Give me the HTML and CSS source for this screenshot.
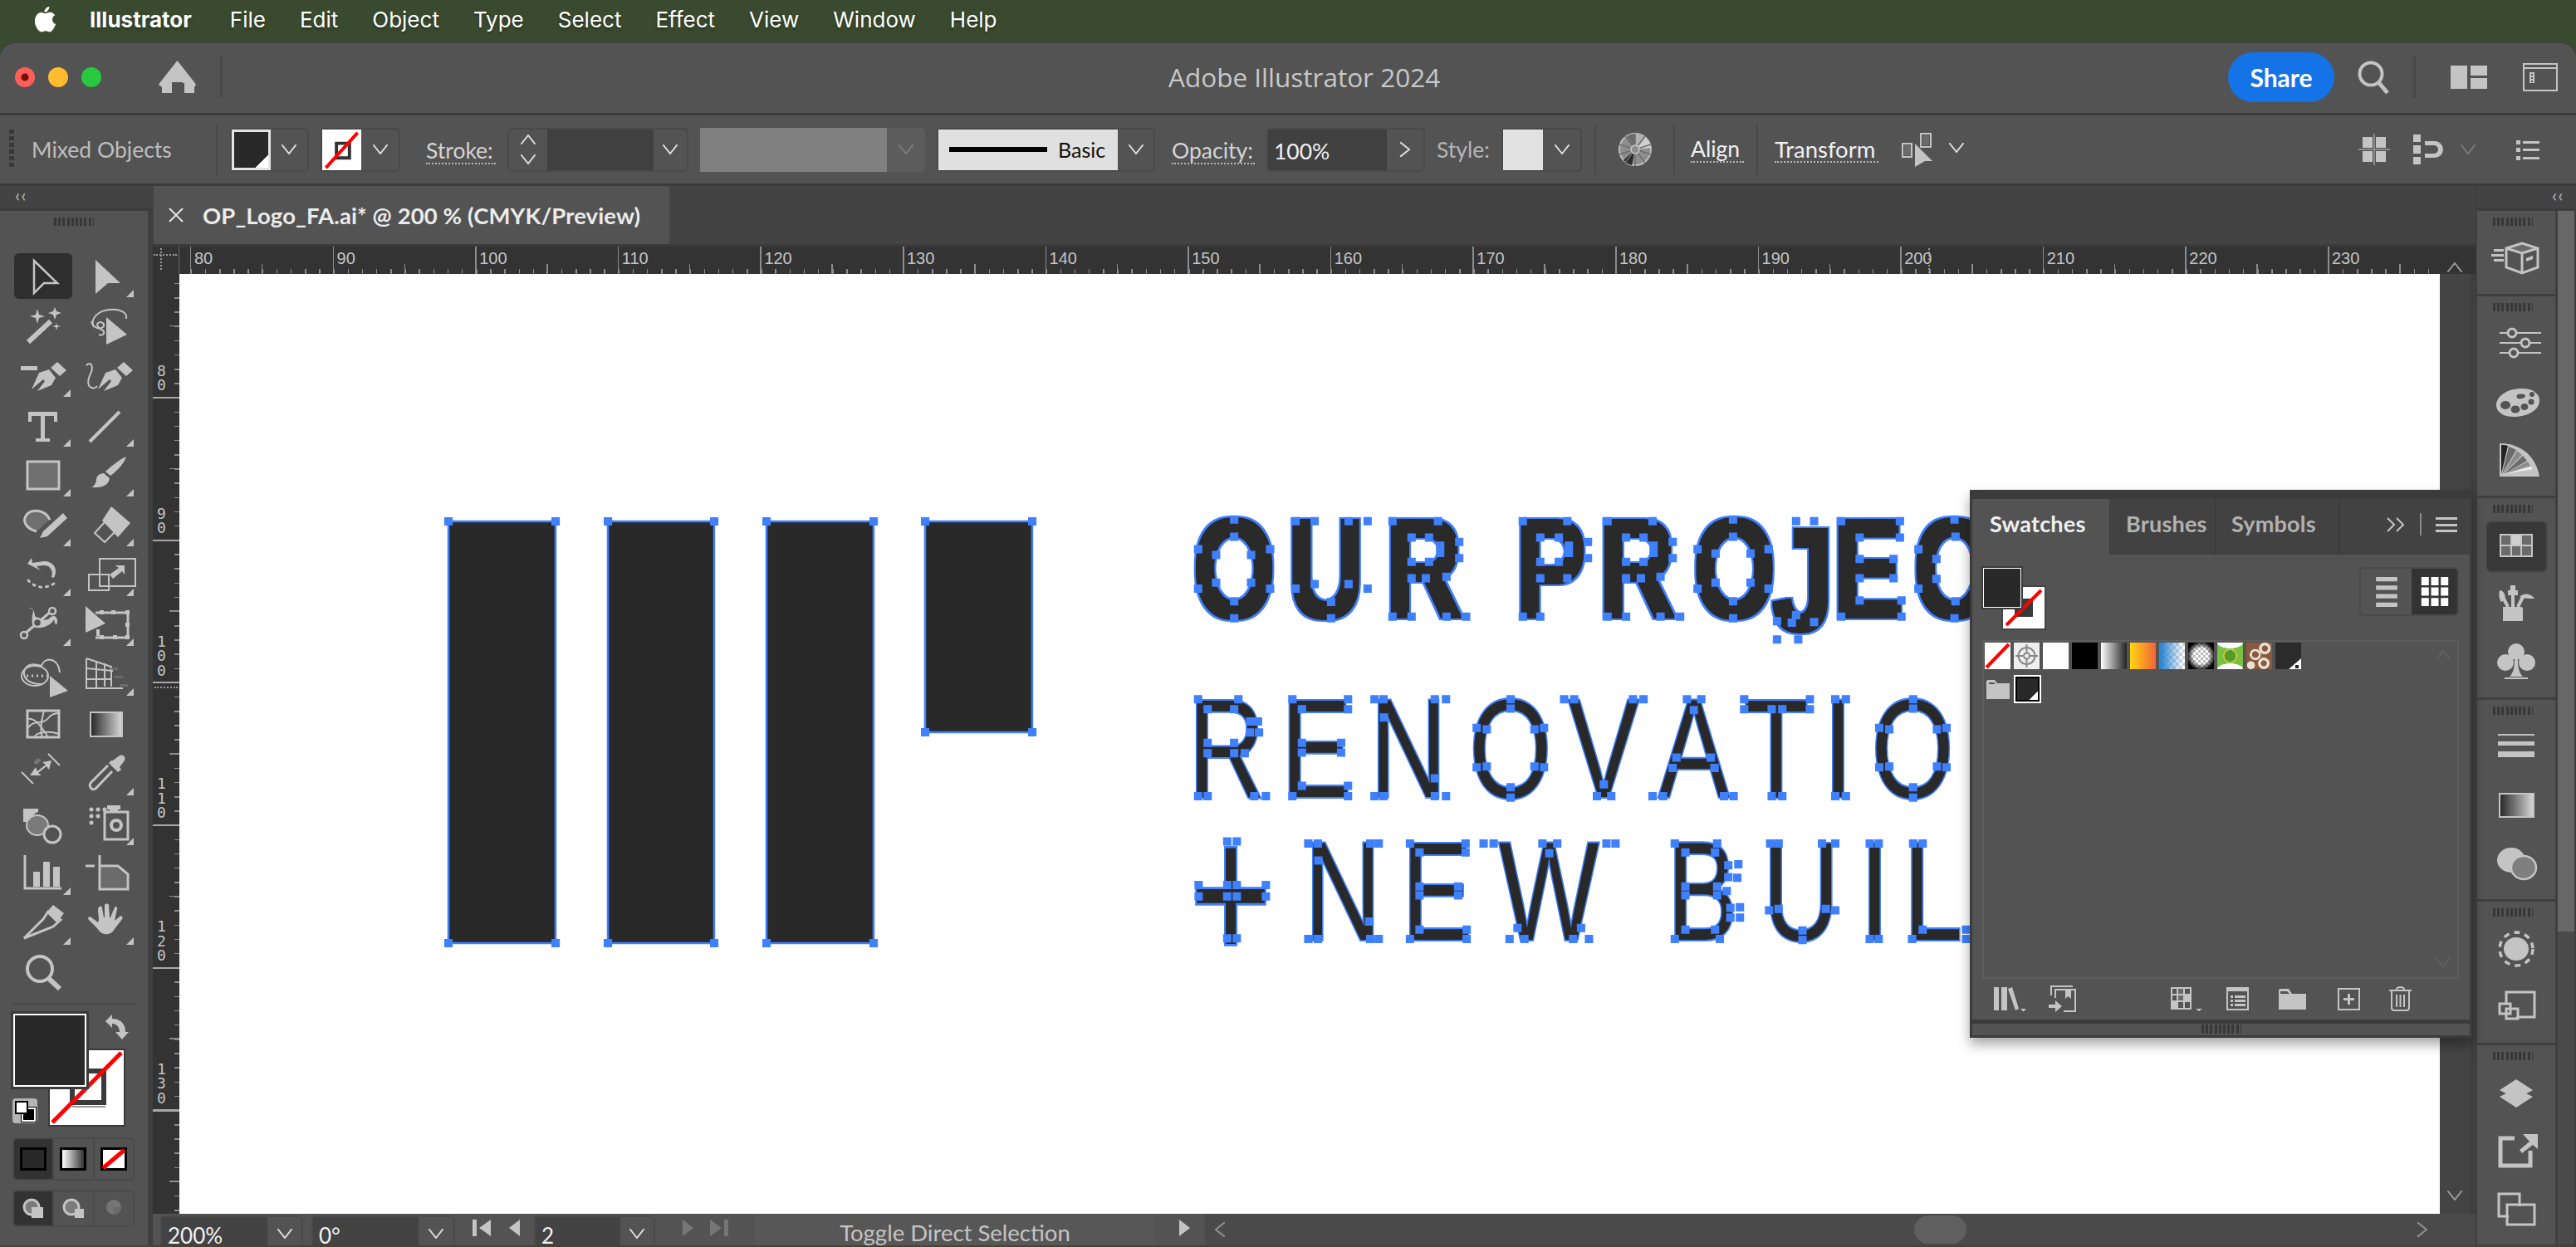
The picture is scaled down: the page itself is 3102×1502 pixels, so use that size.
FILE: index.html
```html
<!DOCTYPE html>
<html lang="en">
<head>
    <meta charset="UTF-8">
    <title>Adobe Illustrator 2024</title>
    <link rel="stylesheet" href="styles.css">
</head>
<body>
<svg class="defs">
    <symbol id="chev" viewBox="0 0 18 12"><path d="M1 1l8 10 8-10"/></symbol>
    <filter id="heavy" x="-5%" y="-10%" width="110%" height="120%">
        <feMorphology in="SourceAlpha" operator="dilate" radius="5.500 3.500" result="outer"/>
        <feFlood flood-color="#3f80ff"/>
        <feComposite in2="outer" operator="in" result="edge"/>
        <feMorphology in="SourceAlpha" operator="dilate" radius="3 1.800" result="inner"/>
        <feFlood flood-color="#292929"/>
        <feComposite in2="inner" operator="in" result="body"/>
        <feMerge><feMergeNode in="edge"/><feMergeNode in="body"/></feMerge>
    </filter>
</svg>

<div class="menubar">
    <svg class="apple" viewBox="0 0 26 32"><path d="M18 0c.3 3-2.600 7-6 7-.4-3 2.600-6.600 6-7zM13 8.500c2 0 3.500-1.500 6-1.500 2.500 0 4.700 1.300 6 3.500-4.800 2.800-4 9.400 1 11.300-1.500 4.200-4.400 9.700-7.300 9.700-2 0-3-1.300-5.200-1.300s-3.300 1.300-5.200 1.300C4.500 31 0 24 0 18 0 11.500 4 7.200 8 7.200c2 0 3.500 1.300 5 1.300z"/></svg>
    <b>Illustrator</b>
    <span>File</span><span>Edit</span><span>Object</span><span>Type</span><span>Select</span><span>Effect</span><span>View</span><span>Window</span><span>Help</span>
</div>

<div class="window">
    <div class="titlebar">
        <div class="title-left">
            <i class="light red"></i><i class="light yellow"></i><i class="light green"></i>
            <svg class="home" viewBox="0 0 45 39"><path d="M22.500 0L43 26l2 3-2 3v7H31V27H22V39H4V32L0 29l2-3z"/><path class="bgcut" d="M16 26h13v13H16z"/></svg>
            <i class="vsep"></i>
        </div>
        <div class="app-title">Adobe Illustrator 2024</div>
        <div class="title-right">
            <div class="share">Share</div>
            <svg class="search" viewBox="0 0 40 40"><circle class="l3" cx="16" cy="16" r="13.500"/><path class="l4" d="M26 27l10 12"/></svg>
            <i class="vsep"></i>
            <svg class="layout1" viewBox="0 0 44 28"><path class="f" d="M0 0h20v28H0zM24 0h20v12H24zM24 15h20v13H24z"/></svg>
            <svg class="layout2" viewBox="0 0 42 34"><path class="l" d="M1 1h40v32H1zM1 6h40"/><path class="f" d="M8 11h6v13H8z"/><path class="d" d="M10 13h2v2h-2zM10 17h2v2h-2zM10 21h2v2h-2z"/></svg>
        </div>
    </div>

    <div class="controlbar">
        <i class="cgrip"></i>
        <span class="mixed">Mixed Objects</span>
        <i class="csep"></i>
        <div class="dd dd-fill">
            <i class="mini-fill"></i>
            <span class="dd-arrow"><svg class="chev"><use href="#chev"/></svg></span>
        </div>
        <div class="dd dd-stroke">
            <i class="mini-stroke"><svg viewBox="0 0 47 50"><path class="sbox" d="M17 17h16v18H17z"/><path class="sred" d="M4 47L43 4"/></svg></i>
            <span class="dd-arrow"><svg class="chev"><use href="#chev"/></svg></span>
        </div>
        <span class="lnk lb-stroke">Stroke:</span>
        <div class="dd spinner">
            <span class="spin"><svg class="chev up"><use href="#chev"/></svg><svg class="chev"><use href="#chev"/></svg></span>
            <i class="input"></i>
            <span class="dd-arrow"><svg class="chev"><use href="#chev"/></svg></span>
        </div>
        <div class="grey-box"></div>
        <span class="dd-arrow dim"><svg class="chev"><use href="#chev"/></svg></span>
        <div class="dd dd-line">
            <div class="line-pre"><i class="line-bar"></i><span>Basic</span></div>
            <span class="dd-arrow"><svg class="chev"><use href="#chev"/></svg></span>
        </div>
        <span class="lnk lb-opacity">Opacity:</span>
        <div class="dd dd-op">
            <span class="input op-val">100%</span>
            <span class="dd-arrow"><svg class="chev side" viewBox="0 0 12 18"><path d="M1 1l10 8-10 8"/></svg></span>
        </div>
        <span class="lb-style">Style:</span>
        <div class="dd dd-style">
            <i class="style-sw"></i>
            <span class="dd-arrow"><svg class="chev"><use href="#chev"/></svg></span>
        </div>
        <i class="csep s1"></i>
        <svg class="wheel" viewBox="0 0 40 40"><circle class="wheel-c" cx="20" cy="20" r="19"/><path class="g" d="M20 20L10 4a19 19 0 0 1 10-3z"/><path class="lg" d="M20 20V1a19 19 0 0 1 12 5z"/><path class="lg2" d="M20 20L32 6a19 19 0 0 1 7 12z"/><path class="dk" d="M20 20L6 33a19 19 0 0 0 10 6z"/><path class="spk" d="M20 1v39M1 14l38 12M1 26l38-12M8 4l24 32M32 4L8 36"/><circle class="hub" cx="20" cy="20" r="5"/></svg>
        <i class="csep s2"></i>
        <span class="lnk bright lb-align">Align</span>
        <i class="csep s3"></i>
        <span class="lnk bright lb-trans">Transform</span>
        <svg class="tr-ic" viewBox="0 0 40 42"><path class="l" d="M1 14h11v16H1zM23 2h12v16H23z"/><path class="g" d="M3 16h8v12H3zM25 4h8v12H25z"/><path class="f" d="M16 14l21 21-9 0-12 7z"/></svg>
        <svg class="chev tr-chev"><use href="#chev"/></svg>
        <div class="ctrl-right">
            <svg class="rc1" viewBox="0 0 38 38"><path class="f" d="M5 4h12v13H5zM21 4h12v13H21zM5 21h12v13H5zM21 21h12v13H21z"/><path class="lt" d="M0 19h38M19 0v38"/></svg>
            <svg class="rc2" viewBox="0 0 37 36"><path class="f" d="M0 0h9v9H0zM0 13h9v10H0zM0 27h9v9H0zM14 8h12a10 10 0 0 1 0 20H14v-5h11a5 5 0 0 0 0-10H14z"/></svg>
            <svg class="chev dimchev"><use href="#chev"/></svg>
            <svg class="rc3" viewBox="0 0 28 28"><path class="f" d="M0 3h5v5H0zM0 12h5v5H0zM0 22h5v5H0zM8 4h20v3H8zM8 13h20v3H8zM8 23h20v3H8z"/></svg>
        </div>
    </div>

    <div class="workspace">
        <div class="dock-left">
            <div class="strip"><span class="collapse">&lsaquo;&lsaquo;</span></div>
            <div class="tool-panel">
                <i class="grip"></i>
                <div class="tools">
                    <div class="t on"><svg viewBox="0 0 44 44"><path class="lp" d="M11 4l28 27H23L11 43z"/></svg></div>
                    <div class="t more"><svg viewBox="0 0 44 44"><path class="f" d="M9 3l30 28-15 0L9 44z"/></svg></div>

                    <div class="t"><svg viewBox="0 0 44 44"><path class="l5" d="M4 42l27-25"/><path class="f" d="M15 2l2 7 7 2-7 2-2 7-2-7-7-2 7-2zM36 0l2 5 6 2-6 2-2 6-2-6-6-2 6-2zM38 19l1 3 4 1-4 1-1 4-1-4-4-1 4-1z"/></svg></div>
                    <div class="t"><svg viewBox="0 0 44 44"><path class="l" d="M7 24C2 14 12 4 26 3c12-1 22 3 20 11M4 17c2 8 9 10 14 7 3-3-1-8-6-5-3 3 2 7 6 9 3 3 0 7-5 5"/><path class="f" d="M22 12l25 21-25 12z"/></svg></div>

                    <div class="t more"><svg viewBox="0 0 44 44"><path class="f" d="M-5 11h20v5H-5zM8 39l9-20 12-4 8 10-5 9-17 7 9-12-2-2z"/><path class="f" d="M31 13l8-7 11 10-8 7z"/></svg></div>
                    <div class="t"><svg viewBox="0 0 44 44"><path class="l" d="M-2 10c6-6 8 2 6 8-4 8-6 16 0 19 3 1 6 0 7-2"/><path class="f" d="M12 39l9-20 12-4 8 10-5 9-17 7 9-12-2-2z"/><path class="f" d="M35 13l8-7 11 10-8 7z"/></svg></div>

                    <div class="t more"><svg viewBox="0 0 44 44"><path class="f" d="M4 6h35v12h-4v-7H24v27h6v4H13v-4h6V11H8v7H4z"/></svg></div>
                    <div class="t more"><svg viewBox="0 0 44 44"><path class="l3" d="M2 42L38 6"/></svg></div>

                    <div class="t more"><svg viewBox="0 0 44 44"><path class="gm" d="M3 6h38v33H3z"/></svg></div>
                    <div class="t more"><svg viewBox="0 0 44 44"><path class="f" d="M46 0c-2 8-12 18-19 23l-6-5C30 10 40 2 46 0zM19 20l7 6c-1 8-8 12-22 11 4-2 6-6 6-10 1-5 5-7 9-7z"/></svg></div>

                    <div class="t more"><svg viewBox="0 0 44 44"><path class="gm" d="M14 30C2 27-4 18 2 10 8 3 24 3 30 16"/><path class="f" d="M22 30L46 8l5 6-24 22-9 2z"/></svg></div>
                    <div class="t more"><svg viewBox="0 0 44 44"><path class="f" d="M28 0l23 20-15 17-19-20z"/><path class="l" d="M20 19L8 32l12 11 14-14"/></svg></div>

                    <div class="t more"><svg viewBox="0 0 44 44"><path class="f" d="M3 9l5-7 1 6 14-2c10 0 18 8 12 20l-3-1c3-9-3-15-10-14L14 12l5 5z"/><path class="dots" d="M4 29c8 9 20 11 31 4"/></svg></div>
                    <div class="t more"><svg viewBox="0 0 44 44"><path class="l" d="M14 3h43v33H14zM1 22h24v19H1z"/><path class="f" d="M26 22l11-8-4-3h11v11l-3-4-11 9z"/></svg></div>

                    <div class="t more"><svg viewBox="0 0 44 44"><path class="f" d="M4 2c6-1 8 6 8 10 2 2 14 8 18 2 4-4 9-2 9 4 0 4-2 8-4-2-2 6-16 14-24 8-4-2-2-14-1-18-1-3-3-3-6-4z"/><path class="lm" d="M-1 34L32 6"/><circle class="ringd" cx="-1" cy="35" r="4"/><circle class="ringd" cx="33" cy="6" r="4"/><circle class="ringd" cx="15" cy="20" r="5"/></svg></div>
                    <div class="t more"><svg viewBox="0 0 44 44"><path class="f" d="M-3 0l24 21-24 11z"/><path class="lm" d="M9 8h39v30H9"/><path class="f" d="M14 5h5v5h-5zM28 5h5v5h-5zM45 5h5v5h-5zM45 20h5v5h-5zM45 35h5v5h-5zM30 35h5v5h-5zM14 35h5v5h-5zM14 28h-4v8h4z"/></svg></div>

                    <div class="t"><svg viewBox="0 0 44 44"><path class="l" d="M20 34C4 34-4 26 0 16c4-8 14-6 20-4C22 2 40 0 42 20"/><ellipse class="l" cx="12" cy="24" rx="16" ry="12"/><path class="dots2" d="M2 24h26"/><path class="f" d="M30 24l22 18-22 8z"/></svg></div>
                    <div class="t more"><svg viewBox="0 0 44 44"><path class="l" d="M-2 3v36h44M-2 3l30 10v24M-2 15l32 3M-2 28h30M10 6v32M20 9v28"/><path class="g" d="M28 14h8v3h-8zM32 24h10v3H32zM38 34h10v3H38z"/></svg></div>

                    <div class="t"><svg viewBox="0 0 44 44"><path class="lm" d="M3 6h38v32H3z"/><path class="l" d="M3 27c10-12 18-2 27-14 4-4 8-4 11-4M21 38c-4-10 0-24 2-32M3 16c8-2 15 6 25 22M12 38c0-6 16-8 29-4"/></svg></div>
                    <div class="t"><div class="ic-grad"></div></div>

                    <div class="t"><svg viewBox="0 0 44 44"><path class="l" d="M-4 20l14 14M28-2l14 14"/><path class="f" d="M6 24L13 14l2 5 10-8-4-3 11-2-3 11-3-4-10 8 4 3z"/><path class="g2" d="M10 8l6-5 4 3-6 5z"/></svg></div>
                    <div class="t more"><svg viewBox="0 0 44 44"><path class="f" d="M30 6l8-6c4-2 8 2 6 6l-6 8 2 3-4 3-11-11 3-3z"/><path class="lm" d="M24 12L4 32c-4 4 0 11 5 8l20-21"/></svg></div>

                    <div class="t"><svg viewBox="0 0 44 44"><path class="f" d="M-2 4h18v4c-6 2-8 6-7 12H-2z"/><ellipse class="gl" cx="15" cy="24" rx="13" ry="12"/><circle class="ringb" cx="33" cy="35" r="10"/></svg></div>
                    <div class="t more"><svg viewBox="0 0 44 44"><path class="f" d="M23 0h16v5h-3v3H26V5h-3z"/><path class="lm" d="M20 8h28v33H20z"/><circle class="ringt" cx="34" cy="24" r="6"/><circle class="f" cx="4" cy="5" r="2.500"/><circle class="f" cx="12" cy="5" r="2.500"/><circle class="f" cx="20" cy="5" r="2.500"/><circle class="f" cx="4" cy="13" r="2.500"/><circle class="f" cx="12" cy="13" r="2.500"/><circle class="f" cx="4" cy="21" r="2.500"/></svg></div>

                    <div class="t more"><svg viewBox="0 0 44 44"><path class="lm" d="M0 0v40h44"/><path class="f" d="M10 20h8v18h-8zM22 8h8v30h-8zM34 14h8v24h-8z"/></svg></div>
                    <div class="t"><svg viewBox="0 0 44 44"><path class="lm" d="M-3 13h11M14 0v13M14 13h22l12 10v18H14z"/><path class="g" d="M16 15h19l11 9v15H16z"/></svg></div>

                    <div class="t more"><svg viewBox="0 0 44 44"><path class="lm" d="M-1 40L22 17l6-9 15 10-9 8-2 1z"/><path class="f" d="M26 9l8-9 13 10-6 8-3 3z"/></svg></div>
                    <div class="t more"><svg viewBox="0 0 44 44"><path class="f" d="M14 2c2-1 3 0 3 2l2 11h1V0c1-2 4-2 5 0l1 15h1l5-12c1-2 4-1 3 2l-3 14 6-5c2-2 5 1 3 3l-9 12c-3 5-7 7-12 6-6-1-7-5-10-8L1 18c-2-2 0-5 3-3l8 6 1-3-1-13c0-1 1-3 2-3z"/></svg></div>

                    <div class="t"><svg viewBox="0 0 44 44"><circle class="l3" cx="18" cy="17" r="15"/><path class="l5" d="M28 28l14 13"/></svg></div>
                </div>

                <i class="tool-sep"></i>

                <div class="color-block">
                    <div class="big-stroke"><svg viewBox="0 0 89 90"><path class="sbox2" d="M27 25h38v38H27z"/><path class="sline" d="M27 68h40"/><path class="sred2" d="M3 87L86 3"/></svg></div>
                    <div class="big-fill"></div>
                    <svg class="swap" viewBox="0 0 28 30"><path class="f" d="M0 8l8-8v5c8 0 16 4 16 16h4l-8 9-8-9h5c0-6-4-10-9-10v5z"/></svg>
                    <div class="defaults"><i class="def-b"></i><i class="def-w"></i></div>
                </div>

                <div class="mode-row">
                    <div class="mode on"><i class="m-fill"></i></div>
                    <div class="mode"><i class="m-grad"></i></div>
                    <div class="mode"><i class="m-none"><svg viewBox="0 0 26 22"><path class="sred" d="M0 22L26 0"/></svg></i></div>
                </div>
                <div class="mode-row small">
                    <div class="mode on"><svg viewBox="0 0 26 24"><circle class="ringo" cx="11" cy="10" r="9"/><path class="f" d="M11 10h14v13H11z"/></svg></div>
                    <div class="mode"><svg viewBox="0 0 26 24"><circle class="ringo" cx="11" cy="10" r="9"/><path class="f" d="M15 12h11v11H15z"/></svg></div>
                    <div class="mode faded"><svg viewBox="0 0 26 24"><circle class="g3" cx="13" cy="10" r="9"/><path class="f2" d="M13 10h9a9 9 0 0 1-9 9z"/></svg></div>
                </div>
            </div>
        </div>

        <div class="doc">
            <div class="tabbar">
                <div class="doc-tab">
                    <svg class="tab-x" viewBox="0 0 18 18"><path d="M1 1l16 16M17 1L1 17"/></svg>
                    <span>OP_Logo_FA.ai* @ 200 % (CMYK/Preview)</span>
                </div>
            </div>
            <div class="hruler">
                <i class="corner"></i>
                <span>80</span><span>90</span><span>100</span><span>110</span><span>120</span><span>130</span><span>140</span><span>150</span><span>160</span><span>170</span><span>180</span><span>190</span><span>200</span><span>210</span><span>220</span><span>230</span>
                <i class="cursor-x"></i>
            </div>
            <div class="doc-mid">
                <div class="vruler">
                    <span>80</span><span>90</span><span>100</span><span>110</span><span>120</span><span>130</span>
                    <i class="cursor-y"></i>
                </div>
                <div class="canvas">
                    <svg class="artwork" viewBox="0 0 3102 1502">
                        <rect class="bar" x="540" y="628" width="129" height="508"/>
                        <rect class="bar" x="732" y="628" width="128" height="508"/>
                        <rect class="bar" x="923" y="628" width="129" height="508"/>
                        <rect class="bar" x="1114" y="628" width="129" height="254"/>
                        <path class="anchor" d="M540 628h.1M669 628h.1M540 1136h.1M669 1136h.1M732 628h.1M860 628h.1M732 1136h.1M860 1136h.1M923 628h.1M1052 628h.1M923 1136h.1M1052 1136h.1M1114 628h.1M1243 628h.1M1114 882h.1M1243 882h.1"/>

                        <text class="art bold" transform="translate(0 743) scale(.76 1)" x="1890 2040 2195 2300 2401 2533 2683 2808 2904 3032">OUR PRO<tspan class="tall-j" dy="16">J</tspan><tspan dy="-16">EC</tspan></text>
                        <text class="art" transform="translate(0 960) scale(.76 1)" x="1883 2030 2171 2328 2485 2628 2763 2889 2965">RENOVATIO</text>
                        <text class="art" transform="translate(1433 1158) scale(1 1.4)">+</text>
                        <text class="art" transform="translate(0 1132) scale(.76 1)" x="2067 2221 2375 2500 2641 2793 2947 3016">NEW BUIL</text>

                        <g transform="translate(1400 600) scale(.6378 .35714)">
                            <path class="anchor" d="M135 72h.1M67 172h.1M203 172h.1M101 192h.1M167 192h.1M135 130h.1M67 305h.1M203 305h.1M101 285h.1M167 285h.1M135 348h.1M135 405h.1M251 78h.1M287 78h.1M351 78h.1M387 78h.1M251 305h.1M287 290h.1M351 290h.1M387 305h.1M318 350h.1M318 405h.1M434 78h.1M520 78h.1M470 133h.1M503 133h.1M560 148h.1M560 202h.1M524 160h.1M524 185h.1M470 215h.1M503 215h.1M470 270h.1M497 270h.1M536 265h.1M434 400h.1M470 400h.1M536 400h.1M573 400h.1M680 78h.1M764 78h.1M713 133h.1M748 133h.1M803 148h.1M803 202h.1M767 160h.1M767 185h.1M713 215h.1M748 215h.1M713 270h.1M764 270h.1M680 400h.1M713 400h.1M840 78h.1M925 78h.1M875 133h.1M908 133h.1M963 148h.1M963 202h.1M927 160h.1M927 185h.1M875 215h.1M908 215h.1M875 270h.1M903 270h.1M940 265h.1M840 400h.1M875 400h.1M940 400h.1M977 400h.1M1077 72h.1M1010 172h.1M1144 172h.1M1044 187h.1M1110 187h.1M1077 130h.1M1010 305h.1M1144 305h.1M1044 285h.1M1110 285h.1M1077 348h.1M1077 405h.1M1196 78h.1M1230 78h.1M1196 395h.1M1230 418h.1M1160 415h.1M1188 420h.1M1160 477h.1M1200 477h.1M1281 78h.1M1392 78h.1M1316 133h.1M1392 133h.1M1316 205h.1M1380 205h.1M1316 270h.1M1380 270h.1M1316 345h.1M1395 345h.1M1281 400h.1M1395 400h.1M1495 72h.1M1427 172h.1M1461 205h.1M1497 130h.1M1427 305h.1M1461 272h.1M1497 348h.1M1495 405h.1"/>
                            <path class="anchor" d="M67 678h.1M143 678h.1M85 712h.1M135 712h.1M165 753h.1M180 753h.1M165 790h.1M182 790h.1M85 825h.1M135 825h.1M85 860h.1M135 860h.1M155 860h.1M67 1005h.1M85 1005h.1M173 1005h.1M195 1005h.1M245 678h.1M350 678h.1M263 712h.1M350 712h.1M263 825h.1M337 825h.1M263 858h.1M337 858h.1M263 970h.1M350 970h.1M245 1005h.1M350 1005h.1M400 678h.1M417 678h.1M514 678h.1M535 678h.1M418 740h.1M514 945h.1M400 1005h.1M417 1005h.1M514 1005h.1M535 1005h.1M657 678h.1M593 775h.1M612 780h.1M702 780h.1M720 775h.1M657 710h.1M593 908h.1M612 905h.1M702 905h.1M720 908h.1M657 975h.1M657 1010h.1M758 678h.1M777 678h.1M888 678h.1M908 678h.1M833 965h.1M820 1005h.1M847 1005h.1M990 678h.1M1017 678h.1M1003 715h.1M970 875h.1M1035 875h.1M963 910h.1M1042 910h.1M925 1005h.1M945 1005h.1M1060 1005h.1M1078 1005h.1M1098 678h.1M1222 678h.1M1098 712h.1M1222 712h.1M1150 712h.1M1170 712h.1M1150 1005h.1M1170 1005h.1M1270 678h.1M1290 678h.1M1270 1005h.1M1290 1005h.1M1417 678h.1M1353 775h.1M1372 780h.1M1462 780h.1M1480 775h.1M1417 710h.1M1353 908h.1M1372 905h.1M1462 905h.1M1480 908h.1M1417 975h.1M1417 1010h.1"/>
                            <path class="anchor" d="M122 1158h.1M140 1158h.1M68 1305h.1M195 1305h.1M68 1343h.1M195 1343h.1M122 1305h.1M140 1305h.1M122 1343h.1M140 1343h.1M122 1485h.1M140 1485h.1M275 1165h.1M293 1165h.1M392 1165h.1M408 1165h.1M294 1222h.1M390 1428h.1M275 1487h.1M293 1487h.1M392 1487h.1M408 1487h.1M467 1165h.1M572 1165h.1M485 1195h.1M572 1195h.1M485 1310h.1M558 1310h.1M485 1340h.1M558 1340h.1M485 1455h.1M574 1455h.1M467 1487h.1M574 1487h.1M606 1165h.1M625 1165h.1M717 1165h.1M745 1165h.1M838 1165h.1M855 1165h.1M730 1198h.1M670 1450h.1M790 1450h.1M655 1487h.1M683 1487h.1M775 1487h.1M805 1487h.1M967 1165h.1M1047 1165h.1M987 1195h.1M1043 1195h.1M1068 1238h.1M1087 1235h.1M1068 1278h.1M1085 1280h.1M987 1310h.1M1047 1310h.1M987 1340h.1M1047 1340h.1M1065 1325h.1M1072 1382h.1M1090 1380h.1M1072 1415h.1M1090 1415h.1M987 1455h.1M1043 1455h.1M967 1487h.1M1052 1487h.1M1147 1165h.1M1163 1165h.1M1245 1165h.1M1270 1165h.1M1145 1390h.1M1163 1385h.1M1252 1385h.1M1270 1390h.1M1208 1458h.1M1208 1490h.1M1335 1165h.1M1352 1165h.1M1335 1487h.1M1352 1487h.1M1417 1165h.1M1435 1165h.1M1435 1455h.1M1517 1455h.1M1415 1487h.1M1517 1487h.1"/>
                        </g>
                    </svg>
                </div>
                <div class="vscroll">
                    <svg class="chev up"><use href="#chev"/></svg>
                    <svg class="chev"><use href="#chev"/></svg>
                </div>
            </div>
            <div class="status">
                <div class="field f200"><span>200%</span><em><svg class="chev"><use href="#chev"/></svg></em></div>
                <div class="field f0"><span>0°</span><em><svg class="chev"><use href="#chev"/></svg></em></div>
                <svg class="nav n-first" viewBox="0 0 24 24"><path class="f" d="M0 2h5v20H0zM22 2v20L8 12z"/></svg>
                <svg class="nav n-prev" viewBox="0 0 16 24"><path class="f" d="M14 2v20L1 12z"/></svg>
                <div class="field fpage"><span>2</span><em><svg class="chev"><use href="#chev"/></svg></em></div>
                <svg class="nav n-next" viewBox="0 0 16 24"><path class="g2" d="M2 2v20l13-10z"/></svg>
                <svg class="nav n-last" viewBox="0 0 24 24"><path class="g2" d="M2 2v20l14-10zM19 2h5v20h-5z"/></svg>
                <div class="status-text">Toggle Direct Selection</div>
                <svg class="nav n-more" viewBox="0 0 16 24"><path class="f" d="M2 2v20l13-10z"/></svg>
                <div class="hscroll">
                    <svg class="chev side left" viewBox="0 0 12 18"><path d="M11 1L1 9l10 8"/></svg>
                    <i class="hthumb"></i>
                    <svg class="chev side" viewBox="0 0 12 18"><path d="M1 1l10 8-10 8"/></svg>
                </div>
            </div>
        </div>

        <div class="dock-right">
            <div class="strip right"><span class="collapse">&lsaquo;&lsaquo;</span></div>
            <div class="dock-body">
                <div class="dock-sections">
                    <div class="sec">
                        <i class="grip"></i>
                        <div class="d-ic"><svg viewBox="0 0 60 44"><path class="g" d="M18 10l19-6 19 6-19 6z"/><path class="lm" d="M18 10l19-6 19 6v23l-19 7-19-7zM18 10l19 6 19-6M37 16v24"/><path class="f" d="M0 17h15v3H0zM3 11h12v3H3zM3 23h12v3H3zM42 22l8-3v4l-8 3z"/></svg></div>
                    </div>
                    <div class="sec">
                        <i class="grip"></i>
                        <div class="d-ic"><svg viewBox="0 0 60 44"><path class="l" d="M10 9h10M30 9h30M10 21h26M46 21h14M10 33h12M32 33h28"/><circle class="lm" cx="25" cy="9" r="5"/><circle class="lm" cx="41" cy="21" r="5"/><circle class="lm" cx="27" cy="33" r="5"/></svg></div>
                        <div class="d-ic"><svg viewBox="0 0 60 44"><path class="f" d="M6 26C6 14 22 5 38 6c10 0 14 3 19 9 3 8-1 16-9 20-10 6-26 6-33 3C9 35 6 31 6 26z"/><path class="d" d="M32 13c6-1 9 0 9 2s-5 4-9 3c-2-1-2-4 0-5z"/><ellipse class="d" cx="17" cy="26" rx="6" ry="5"/><ellipse class="d" cx="29" cy="31" rx="5.500" ry="4.500"/><ellipse class="d" cx="40" cy="28" rx="4.500" ry="4"/><ellipse class="d" cx="48" cy="22" rx="3.500" ry="3.500"/><ellipse class="d" cx="49" cy="13" rx="3" ry="3"/></svg></div>
                        <div class="d-ic"><svg viewBox="0 0 60 44"><path class="f" d="M10 2c26 0 44 16 48 40H10z"/><path class="k" d="M12 4c3 0 6 0 8 1l-8 34z"/><path class="g" d="M21 6c3 1 6 2 9 4L13 39z"/><path class="g3" d="M31 11l6 5-23 23z"/><path class="g" d="M38 17l5 6-28 16z"/><path class="g3" d="M44 24l3 5-32 10z"/><path class="lw" d="M48 30l2 3-35 6z"/></svg></div>
                    </div>
                    <div class="sec">
                        <i class="grip"></i>
                        <div class="d-ic on"><svg viewBox="0 0 60 44"><path class="f" d="M10 8h40v28H10z"/><path class="g" d="M12 10h11v11H12zM37 10h11v11H37zM12 23h11v11H12zM25 23h10v11H25zM37 23h11v11H37z"/><path class="lg2" d="M25 10h10v11H25z"/></svg></div>
                        <div class="d-ic"><svg viewBox="0 0 60 44"><path class="f" d="M14 26h22a2 2 0 0 1 2 2v15H14z"/><path class="l3" d="M26 26V12M20 26L14 14M32 26l6-12"/><path class="f" d="M23 0h6v6h3v6H20V6h3zM10 6c5 0 8 6 6 12l-4 2c-3-4-3-10-2-14zM34 14c6-6 14-4 18 2-6 0-14 0-18-2z"/></svg></div>
                        <div class="d-ic"><svg viewBox="0 0 60 44"><circle class="f" cx="30" cy="10" r="10"/><circle class="f" cx="17" cy="23" r="10"/><circle class="f" cx="43" cy="23" r="10"/><path class="f" d="M28 20h4c0 10 2 16 6 20H22c4-4 6-10 6-20zM16 41h28v2H16z"/></svg></div>
                    </div>
                    <div class="sec">
                        <i class="grip"></i>
                        <div class="d-ic"><svg viewBox="0 0 60 44"><path class="f" d="M8 6h44v2H8zM8 15h44v5H8zM8 27h44v7H8z"/></svg></div>
                        <div class="d-ic"><div class="ic-grad side"></div></div>
                        <div class="d-ic"><svg viewBox="0 0 60 44"><ellipse class="f" cx="24" cy="18" rx="17" ry="15"/><ellipse class="g4" cx="39" cy="27" rx="15" ry="14"/></svg></div>
                    </div>
                    <div class="sec">
                        <i class="grip"></i>
                        <div class="d-ic"><svg viewBox="0 0 60 44"><ellipse class="f" cx="30" cy="22" rx="15" ry="14"/><ellipse class="dash" cx="30" cy="22" rx="20" ry="20"/></svg></div>
                        <div class="d-ic"><svg viewBox="0 0 60 44"><path class="lm" d="M18 18V4h34v30H30"/><path class="lm" d="M10 18h13v12H10zM18 24h14v12H18z"/></svg></div>
                    </div>
                    <div class="sec">
                        <i class="grip"></i>
                        <div class="d-ic"><svg viewBox="0 0 60 44"><path class="f" d="M30 6l20 13-20 11-20-11zM10 27l8-4 12 7 12-7 8 4-20 13z"/></svg></div>
                        <div class="d-ic"><svg viewBox="0 0 60 44"><path class="l4" d="M28 7H11v33h36V22"/><path class="f" d="M38 2h18v18l-6-5-13 10-3-4 12-10z"/></svg></div>
                        <div class="d-ic"><svg viewBox="0 0 60 44"><path class="lm" d="M9 4h25v27H9zM19 17h33v24H19z"/><path class="d" d="M21 19h29v20H21z"/></svg></div>
                    </div>
                </div>
                <div class="dock-scroll"><i></i></div>
            </div>
        </div>

        <div class="swatch-panel">
            <div class="sw-tabs">
                <span class="sw-tab on">Swatches</span>
                <span class="sw-tab brushes">Brushes</span>
                <span class="sw-tab symbols">Symbols</span>
                <div class="sw-menu">
                    <svg class="sw-dbl" viewBox="0 0 22 18"><path d="M1 1l8 8-8 8M12 1l8 8-8 8"/></svg>
                    <i class="sw-bar"></i>
                    <svg class="sw-ham" viewBox="0 0 26 18"><path class="f" d="M0 0h26v3H0zM0 8h26v3H0zM0 15h26v3H0z"/></svg>
                </div>
            </div>
            <div class="sw-body">
                <div class="sw-top">
                    <div class="fs-mini">
                        <div class="fs-stroke"><svg viewBox="0 0 46 46"><path class="sbox3" d="M13 13h20v20H13z"/><path class="sred" d="M2 44L44 2"/></svg></div>
                        <div class="fs-fill"></div>
                    </div>
                    <div class="view-toggle">
                        <div class="vt"><svg viewBox="0 0 30 42"><path class="f" d="M0 0h30v6H0zM0 12h30v6H0zM0 24h30v6H0zM0 36h30v6H0z"/></svg></div>
                        <div class="vt on"><svg viewBox="0 0 36 40"><path class="w" d="M0 0h10v11H0zM13 0h10v11H13zM26 0h10v11H26zM0 14h10v11H0zM13 14h10v11H13zM26 14h10v11H26zM0 28h10v11H0zM13 28h10v11H13zM26 28h10v11H26z"/></svg></div>
                    </div>
                </div>
                <div class="sw-list">
                    <div class="sw-row">
                        <i class="sw none"><svg viewBox="0 0 31 32"><path class="sred" d="M2 30L29 2"/></svg></i>
                        <i class="sw reg"><svg viewBox="0 0 31 32"><circle class="rg" cx="15.500" cy="16" r="10"/><circle class="rg" cx="15.500" cy="16" r="3.500"/><path class="rg" d="M15.500 2v10M15.500 20v10M2 16h10M19 16h10"/></svg></i>
                        <i class="sw white"></i>
                        <i class="sw black"></i>
                        <i class="sw grad1"></i>
                        <i class="sw grad2"></i>
                        <i class="sw grad3"></i>
                        <i class="sw grad4"></i>
                        <i class="sw pat1"></i>
                        <i class="sw pat2"></i>
                        <i class="sw dark"><svg viewBox="0 0 31 32"><path class="w" d="M31 19v13H16z"/><path class="k" d="M24 27h4v4h-4z"/></svg></i>
                    </div>
                    <div class="sw-row">
                        <svg class="sw-folder" viewBox="0 0 28 23"><path class="f" d="M0 2a2 2 0 0 1 2-2h8l3 4h15v19H0z"/><path class="d" d="M3 3h6l2 2H3z"/></svg>
                        <i class="sw doc-sw"></i>
                    </div>
                    <svg class="chev list-up"><use href="#chev"/></svg>
                    <svg class="chev list-down"><use href="#chev"/></svg>
                </div>
                <div class="sw-tools">
                    <svg class="st-lib" viewBox="0 0 40 28"><path class="f" d="M0 0h6v28H0zM9 0h7v28H9z"/><path class="f" d="M17 2l5-2 8 26-4 2z"/><path class="f" d="M32 26h7l-3.500 3.500z"/></svg>
                    <svg class="st-imp" viewBox="0 0 32 32"><path class="l" d="M3 12V1h26M8 9V5h24v26H18M8 9v6"/><path class="f" d="M0 23h8v-5l8 7-8 7v-5H0zM20 5h7v11l-3.500-3-3.500 3z"/></svg>
                    <svg class="st-grid" viewBox="0 0 38 29"><path class="f" d="M0 0h25v27H0z"/><path class="d" d="M2 2h5v6H2zM17 2h6v6h-6zM17 18h6v7h-6zM9 18h6v7H9zM2 10h5v6H2z"/><path class="g" d="M9 2h6v6H9zM9 10h6v6H9z"/><path class="f" d="M30 26h8l-4 3z"/></svg>
                    <svg class="st-list" viewBox="0 0 27 28"><path class="l" d="M1 1h25v26H1z"/><path class="f" d="M1 1h25v4H1zM5 10h3v3H5zM5 15h3v3H5zM5 20h3v3H5zM10 10h13v3H10zM10 15h13v3H10zM10 20h13v3H10z"/></svg>
                    <svg class="st-folder" viewBox="0 0 33 25"><path class="f" d="M0 2a2 2 0 0 1 2-2h10l4 6h17v19H0z"/><path class="d" d="M2 3h8l3 3H2z"/></svg>
                    <svg class="st-new" viewBox="0 0 27 27"><path class="l" d="M1 1h25v25H1z"/><path class="f" d="M12 7h3v5h5v3h-5v5h-3v-5H7v-3h5z"/></svg>
                    <svg class="st-trash" viewBox="0 0 27 30"><path class="l" d="M9 4c0-4 9-4 9 0M0 5h27M3 5v21a3 3 0 0 0 3 3h15a3 3 0 0 0 3-3V5"/><path class="f" d="M8 10h2v15H8zM12.500 10h2v15h-2zM17 10h2v15h-2z"/></svg>
                </div>
            </div>
            <div class="sw-foot"><i></i></div>
        </div>
    </div>
</div>
<div class="dock-line"></div>
</body>
</html>
```

FILE: styles.css
```css
* {
    margin: 0;
    padding: 0;
    box-sizing: border-box;
}

html, body {
    width: 3102px;
    height: 1502px;
    overflow: hidden;
    background: #3a4a2e;
    font-family: "Lato", "Liberation Sans", sans-serif;
    color: #c8c8c8;
}

i {
    display: block;
    font-style: normal;
}

svg {
    display: block;
    overflow: visible;
}

.defs {
    position: absolute;
    width: 0;
    height: 0;
}

/* svg paint helpers */
.f { fill: #c4c4c4; }
.f2 { fill: #7c7c7c; }
.d { fill: #535353; }
.g { fill: #6b6b6b; }
.g2 { fill: #767676; }
.g3 { fill: #8c8c8c; }
.gl { fill: #7a7a7a; stroke: #c4c4c4; stroke-width: 2; }
.gm { fill: #6f6f6f; stroke: #c4c4c4; stroke-width: 3; }
.g4 { fill: #7f7f7f; stroke: #c4c4c4; stroke-width: 2.500; }
.k { fill: #222; }
.w { fill: #fff; }
.lw { fill: #eee; }
.lg { fill: #b0b0b0; }
.lg2 { fill: #d0d0d0; }
.dk { fill: #2c2c2c; }
.l, .lm, .l3, .l4, .l5, .lp, .dots, .dots2, .lt, .dash, .ringd, .ringb, .ringt, .ringo {
    fill: none;
    stroke: #c4c4c4;
    stroke-width: 2;
}
.lm { stroke-width: 3; }
.l3 { stroke-width: 4; }
.l4 { stroke-width: 5; }
.l5 { stroke-width: 6; }
.lp { stroke-width: 2.500; }
.lt { stroke: #8a8a8a; }
.dots { stroke-dasharray: 2 6; stroke-width: 3; stroke-linecap: round; }
.dots2 { stroke-dasharray: 2 4; stroke-width: 3; }
.dash { stroke-dasharray: 7 6; stroke-width: 3.500; }
.ringd { fill: #535353; stroke-width: 2.500; }
.ringb { fill: #535353; stroke-width: 3; }
.ringt { stroke-width: 4; }
.ringo { fill: #7c7c7c; stroke-width: 3; }

.chev {
    width: 18px;
    height: 12px;
    fill: none;
    stroke: #dcdcdc;
    stroke-width: 2;
    stroke-linecap: square;
}

.chev.up {
    transform: scaleY(-1);
}

.chev.side {
    width: 12px;
    height: 18px;
}

/* mac menu */
.menubar {
    height: 50px;
    display: flex;
    align-items: center;
    padding: 0 0 3px 41px;
    font-family: "Inter", "Liberation Sans", sans-serif;
    font-size: 26px;
    color: #fff;
    gap: 41px;
    text-shadow: 0 2px 3px rgba(0, 0, 0, .35);
}

.menubar b {
    margin-right: 5px;
}

.apple {
    width: 27px;
    height: 31px;
    fill: #fff;
    margin-right: -1px;
}

.window {
    width: 3102px;
    height: 1450px;
    background: #535353;
    border-top: 2px solid #414141;
    border-radius: 20px 20px 0 0;
    overflow: hidden;
}

/* title bar */
.titlebar {
    height: 87px;
    display: flex;
    align-items: center;
    padding-bottom: 3px;
    border-bottom: 3px solid #3b3b3b;
}

.title-left {
    width: 1407px;
    display: flex;
    align-items: center;
    padding-left: 18px;
}

.light {
    width: 24px;
    height: 24px;
    border-radius: 50%;
    margin-right: 16px;
}

.red { background: radial-gradient(circle, #7a0d07 0 4px, #ff5f57 5px); }
.yellow { background: #febc2e; }
.green { background: #28c840; }

.home {
    width: 45px;
    height: 39px;
    fill: #c4c4c4;
    margin-left: 53px;
}

.bgcut {
    fill: #535353;
}

.vsep {
    width: 3px;
    height: 50px;
    background: #494949;
}

.title-left .vsep {
    margin-left: 29px;
}

.app-title {
    font-family: "Open Sans", "Lato", sans-serif;
    font-size: 31.500px;
    color: #c8c8c8;
    white-space: nowrap;
}

.title-right {
    margin-left: auto;
    display: flex;
    align-items: center;
    padding-right: 22px;
}

.share {
    width: 128px;
    height: 60px;
    border-radius: 30px;
    background: #1473e6;
    color: #fff;
    font-size: 30px;
    font-weight: 700;
    display: flex;
    align-items: center;
    justify-content: center;
}

.search {
    width: 40px;
    height: 40px;
    margin-left: 28px;
}

.title-right .vsep {
    margin-left: 27px;
}

.layout1 {
    width: 44px;
    height: 28px;
    margin-left: 42px;
}

.layout2 {
    width: 42px;
    height: 34px;
    margin-left: 43px;
}

/* control bar */
.controlbar {
    height: 85px;
    display: flex;
    align-items: center;
    border-bottom: 3px solid #3b3b3b;
    font-size: 26.500px;
    white-space: nowrap;
}

.cgrip {
    width: 6px;
    height: 48px;
    margin-left: 11px;
    background: repeating-linear-gradient(180deg, #383838 0 5px, transparent 5px 8px);
}

.mixed {
    width: 222px;
    margin-left: 21px;
    color: #bdbdbd;
}

.csep {
    width: 2px;
    height: 60px;
    background: #494949;
}

.dd {
    height: 53px;
    display: flex;
    align-items: stretch;
    background: #4a4a4a;
    border: 2px solid #4a4a4a;
    border-radius: 5px;
}

.dd-arrow {
    flex: 1;
    display: flex;
    align-items: center;
    justify-content: center;
    background: #535353;
    border-radius: 0 4px 4px 0;
}

.dd-fill { width: 95px; margin-left: 15px; }
.dd-stroke { width: 96px; margin-left: 14px; }

.mini-fill {
    width: 47px;
    background: linear-gradient(135deg, #292929 0 82%, #fff 82%);
    border: 3px solid #e4e4e4;
}

.mini-stroke {
    width: 47px;
    background: #fff;
}

.sbox { fill: none; stroke: #333; stroke-width: 4; }
.sbox2 { fill: none; stroke: #3a3a3a; stroke-width: 6; }
.sbox3 { fill: #3a3a3a; stroke: #3a3a3a; stroke-width: 2; }
.sline { fill: none; stroke: #333; stroke-width: 1; }
.sred { fill: none; stroke: #f00; stroke-width: 4; }
.sred2 { fill: none; stroke: #f00; stroke-width: 5; }

.mini-stroke svg { width: 100%; height: 100%; }

.lnk {
    border-bottom: 2px dotted #b8b8b8;
    line-height: 29px;
    margin-top: 4px;
    color: #d4d4d4;
}

.bright { color: #f0f0f0; margin-top: 0; }

.lb-stroke { width: 84px; margin-left: 31px; }
.lb-opacity { width: 100px; margin-left: 20px; }
.lb-style { width: 65px; margin-left: 14px; color: #b4b4b4; }
.lb-align { width: 64px; margin-left: 19px; }
.lb-trans { width: 125px; margin-left: 20px; font-size: 27.500px; }

.spinner { width: 218px; margin-left: 14px; }

.spin {
    width: 46px;
    display: flex;
    flex-direction: column;
    align-items: center;
    justify-content: center;
    gap: 12px;
    background: #535353;
}

.input {
    background: #404040;
    width: 128px;
}

.grey-box {
    width: 225px;
    height: 53px;
    margin-left: 14px;
    background: #808080;
}

.dim {
    flex: none;
    width: 46px;
    height: 53px;
    background: #5c5c5c;
    border-radius: 0 5px 5px 0;
}

.dim .chev, .dimchev {
    stroke: #7b7b7b;
}

.dd-line { width: 263px; margin-left: 14px; }

.line-pre {
    width: 216px;
    background: #e0e0e0;
    display: flex;
    align-items: center;
    padding-left: 13px;
    color: #111;
    font-size: 25px;
}

.line-bar {
    width: 118px;
    height: 6px;
    background: #000;
    margin-right: 13px;
}

.dd-op { width: 191px; margin-left: 14px; }

.op-val {
    width: 143px;
    padding: 10px 0 0 7px;
    color: #f0f0f0;
}

.dd-style { width: 97px; margin-left: 13px; }

.style-sw {
    width: 48px;
    background: #e2e2e2;
}

.s1 { margin-left: 15px; }
.s2 { margin-left: 26px; }
.s3 { margin-left: 15px; }

.wheel {
    width: 40px;
    height: 40px;
    margin-left: 27px;
}

.wheel-c { fill: #8e8e8e; stroke: #bdbdbd; stroke-width: 2; }
.spk { fill: none; stroke: #6e6e6e; stroke-width: 1.500; }
.hub { fill: #8e8e8e; stroke: #cfcfcf; stroke-width: 1.500; }

.tr-ic {
    width: 40px;
    height: 42px;
    margin-left: 28px;
}

.tr-chev {
    margin-left: 17px;
    margin-top: -5px;
}

.ctrl-right {
    margin-left: auto;
    display: flex;
    align-items: center;
    padding-right: 44px;
}

.rc1 { width: 38px; height: 38px; }
.rc2 { width: 37px; height: 36px; margin-left: 28px; }
.dimchev { margin-left: 20px; }
.rc3 { width: 28px; height: 28px; margin-left: 49px; }

/* main area */
.workspace {
    position: relative;
    height: 1276px;
    display: flex;
    background: #3f3f3f;
}

.dock-left {
    width: 184px;
    flex: none;
}

.strip {
    height: 29px;
    background: #434343;
    border-bottom: 2px solid #3b3b3b;
    padding-left: 18px;
    color: #b5b5b5;
}

.strip.right {
    padding-left: 90px;
}

.collapse {
    display: block;
    font-size: 22px;
    line-height: 22px;
    letter-spacing: 1px;
}

.tool-panel {
    width: 178px;
    height: 1247px;
    margin-top: 1px;
    background: #535353;
}

.grip {
    width: 48px;
    height: 10px;
    background: repeating-linear-gradient(90deg, #373737 0 3px, transparent 3px 5.200px);
}

.tool-panel > .grip {
    margin: 0 auto;
    position: relative;
    top: 8px;
}

.tools {
    margin-top: 38px;
    padding-left: 14px;
    display: grid;
    grid-template-columns: 76px 76px;
    grid-auto-rows: 60px;
}

.t {
    position: relative;
    display: flex;
    align-items: center;
    justify-content: center;
}

.t svg {
    width: 44px;
    height: 44px;
}

.t.on::before {
    content: "";
    position: absolute;
    left: 3px;
    top: 3px;
    width: 70px;
    height: 55px;
    border-radius: 6px;
    background: #2e2e2e;
}

.t.on svg {
    position: relative;
}

.t.more::after {
    content: "";
    position: absolute;
    right: 5px;
    bottom: 4px;
    border-style: solid;
    border-width: 0 0 9px 9px;
    border-color: transparent transparent #c4c4c4 transparent;
}

.ic-grad {
    width: 40px;
    height: 31px;
    border: 2px solid #c4c4c4;
    background: linear-gradient(90deg, #2a2a2a, #d4d4d4);
}

.ic-grad.side {
    width: 43px;
    height: 30px;
}

.tool-sep {
    width: 150px;
    height: 2px;
    margin: 6px 0 0 15px;
    background: #484848;
}

.color-block {
    position: relative;
    width: 150px;
    height: 138px;
    margin: 10px 0 0 15px;
}

.big-fill {
    position: absolute;
    left: 0;
    top: 0;
    width: 90px;
    height: 90px;
    background: #292929;
    border: 3px solid #fff;
    outline: 3px solid #3a3a3a;
    outline-offset: -1px;
}

.big-stroke {
    position: absolute;
    left: 45px;
    top: 45px;
    width: 89px;
    height: 90px;
    background: #fff;
    outline: 2px solid #3a3a3a;
}

.swap {
    position: absolute;
    left: 112px;
    top: 2px;
    width: 28px;
    height: 30px;
}

.defaults {
    position: absolute;
    left: 0;
    top: 103px;
    width: 30px;
    height: 30px;
    border-radius: 4px;
    background: #b5b5b5;
}

.def-b {
    position: absolute;
    right: 2px;
    bottom: 2px;
    width: 17px;
    height: 17px;
    background: #000;
    border: 2px solid #fff;
    outline: 1px solid #000;
}

.def-w {
    position: absolute;
    left: 3px;
    top: 3px;
    width: 16px;
    height: 16px;
    background: #fff;
    border: 2px solid #000;
}

.mode-row {
    width: 147px;
    height: 52px;
    margin: 12px 0 0 15px;
    display: flex;
    border: 2px solid #4a4a4a;
    border-radius: 6px;
    overflow: hidden;
}

.mode-row.small {
    height: 45px;
    margin-top: 11px;
}

.mode {
    flex: 1;
    display: flex;
    align-items: center;
    justify-content: center;
    border-left: 2px solid #4a4a4a;
}

.mode.on {
    background: #323232;
    border-left: 0;
}

.mode svg {
    width: 26px;
    height: 24px;
}

.mode.faded {
    opacity: .6;
}

.m-fill, .m-grad, .m-none {
    width: 32px;
    height: 28px;
    border: 3px solid #000;
}

.m-fill { background: #292929; }
.m-grad { background: linear-gradient(90deg, #fff, #333); }
.m-none { background: #fff; }

.m-none svg {
    width: 100%;
    height: 100%;
}

.m-none .sred { stroke-width: 5; }

.doc {
    width: 2797px;
    flex: none;
    display: flex;
    flex-direction: column;
}

.tabbar {
    height: 73px;
    padding-top: 0;
    background: #434343;
    border-bottom: 3px solid #3b3b3b;
}

.doc-tab {
    width: 621px;
    height: 70px;
    margin-left: 1px;
    display: flex;
    align-items: center;
    background: #535353;
    color: #ebebeb;
    font-size: 27.500px;
    font-weight: 700;
    letter-spacing: .1px;
}

.tab-x {
    width: 18px;
    height: 18px;
    margin: 0 23px 0 18px;
    stroke: #e4e4e4;
    stroke-width: 2;
}

.hruler {
    position: relative;
    height: 33px;
    display: flex;
    padding-left: 46px;
    background:
        repeating-linear-gradient(90deg, transparent 0 45px, #8c8c8c 45px 46.500px, transparent 46.500px 171.600px) 0 0 / 2754px 100% no-repeat,
        repeating-linear-gradient(90deg, transparent 0 131px, #8c8c8c 131px 132.500px, transparent 132.500px 171.600px) 0 100% / 2754px 12px no-repeat,
        repeating-linear-gradient(90deg, transparent 0 11.500px, #8c8c8c 11.500px 13px, transparent 13px 17.160px) 0 100% / 2754px 6px no-repeat,
        #333;
    font-family: "Liberation Sans", sans-serif;
    font-size: 20px;
    color: #c4c4c4;
}

.hruler span {
    width: 171.600px;
    flex: none;
    padding: 4px 0 0 4px;
    line-height: 20px;
}

.corner {
    position: absolute;
    left: 0;
    top: 0;
    width: 32px;
    height: 33px;
    background: #333;
    border-right: 1px solid #666;
}

.corner::before {
    content: "";
    position: absolute;
    left: 1px;
    top: 9px;
    width: 28px;
    border-top: 2px dotted #9a9a9a;
}

.corner::after {
    content: "";
    position: absolute;
    left: 9px;
    top: 2px;
    height: 26px;
    border-left: 2px dotted #9a9a9a;
}

.cursor-x {
    position: absolute;
    left: 2138px;
    top: 2px;
    height: 30px;
    border-left: 2px dotted #9a9a9a;
}

.doc-mid {
    flex: 1;
    display: flex;
    padding-right: 7px;
    min-height: 0;
}

.vruler {
    position: relative;
    width: 32px;
    flex: none;
    display: flex;
    flex-direction: column;
    padding-top: 0;
    overflow: hidden;
    background:
        repeating-linear-gradient(180deg, transparent 0 148px, #a8a8a8 148px 150px, transparent 150px 171.700px) 0 0 / 100% 100% no-repeat,
        repeating-linear-gradient(180deg, transparent 0 62px, #8c8c8c 62px 63.500px, transparent 63.500px 171.700px) 100% 0 / 12px 100% no-repeat,
        repeating-linear-gradient(180deg, transparent 0 11px, #8c8c8c 11px 12.500px, transparent 12.500px 17.170px) 100% 0 / 6px 100% no-repeat,
        #333;
    font-family: "DejaVu Sans Mono", monospace;
    font-size: 18px;
    color: #c4c4c4;
}

.vruler span {
    flex: none;
    height: 171.700px;
    width: 11px;
    margin-left: 5px;
    line-height: 17.600px;
    word-break: break-all;
    display: flex;
    align-items: flex-end;
    padding-bottom: 6px;
}

.vruler span:first-child {
    height: 149px;
}

.cursor-y {
    position: absolute;
    left: 2px;
    top: 497px;
    width: 28px;
    border-top: 2px dotted #9a9a9a;
}

.canvas {
    position: relative;
    flex: 1;
    background: #fff;
    overflow: hidden;
}

.artwork {
    position: absolute;
    left: -216px;
    top: -330px;
    width: 3102px;
    height: 1502px;
}

.bar {
    fill: #292929;
    stroke: #3f80ff;
    stroke-width: 2.500;
}

.anchor {
    fill: none;
    stroke: #3f80ff;
    stroke-width: 10;
    stroke-linecap: square;
    vector-effect: non-scaling-stroke;
}

.art {
    font-family: "Liberation Sans", sans-serif;
    font-size: 168px;
    fill: #292929;
    stroke: #3f80ff;
    stroke-width: 4;
    paint-order: stroke;
}

.art.bold {
    font-weight: 700;
    stroke: none;
    filter: url(#heavy);
}

.tall-j {
    font-size: 176px;
}

.vscroll {
    width: 36px;
    flex: none;
    background: #444;
    display: flex;
    flex-direction: column;
    align-items: center;
    justify-content: space-between;
    padding: 0 0 16px;
}

.vscroll .chev {
    stroke: #999;
    width: 20px;
    margin-top: -14px;
}

.vscroll .chev:last-child {
    margin-top: 0;
}

.status {
    height: 38px;
    display: flex;
    align-items: flex-start;
    overflow: hidden;
    background: #535353;
    font-size: 26px;
    padding-left: 9px;
}

.field {
    height: 46px;
    display: flex;
    margin-top: 2px;
    background: #4a4a4a;
    border: 2px solid #4a4a4a;
    border-radius: 5px 5px 0 0;
    color: #f2f2f2;
}

.field span {
    display: block;
    background: #434343;
    padding: 6px 0 0 7px;
}

.field em {
    flex: 1;
    display: flex;
    justify-content: center;
    padding-top: 14px;
    background: #535353;
}

.f200 { width: 172px; }
.f200 span { width: 127px; }
.f0 { width: 173px; margin-left: 10px; }
.f0 span { width: 127px; }
.fpage { width: 146px; }
.fpage span { width: 102px; }

.nav {
    height: 24px;
    margin-top: 5px;
}

.n-first { width: 24px; margin-left: 21px; }
.n-prev { width: 16px; margin: 5px 15px 0 19px; }
.n-next { width: 16px; margin-left: 31px; }
.n-last { width: 24px; margin-left: 17px; }

.status-text {
    width: 482px;
    margin-left: 32px;
    padding-top: 6px;
    text-align: center;
    color: #c4c4c4;
    background: #575757;
    height: 38px;
    font-size: 27.500px;
}

.n-more {
    width: 16px;
    margin-left: 27px;
}

.hscroll {
    flex: 1;
    height: 38px;
    margin-left: 17px;
    display: flex;
    align-items: center;
    background: #4a4a4a;
    padding: 0 58px 0 12px;
    justify-content: space-between;
}

.hscroll .chev {
    stroke: #909090;
}

.hthumb {
    width: 63px;
    height: 34px;
    border-radius: 17px;
    background: #5f5f5f;
    margin-left: 286px;
}

.dock-right {
    flex: 1;
    padding-left: 2px;
}

.dock-body {
    display: flex;
    margin-top: 1px;
}

.dock-sections {
    width: 94px;
    flex: none;
    display: flex;
    flex-direction: column;
    gap: 3px;
}

.sec {
    background: #535353;
    padding: 8px 0 8px;
}

.sec .grip {
    margin: 0 auto 4px 19px;
}

.d-ic {
    position: relative;
    height: 70px;
    display: flex;
    align-items: center;
    justify-content: center;
}

.d-ic svg {
    width: 60px;
    height: 44px;
}

.d-ic.on::before {
    content: "";
    position: absolute;
    left: 10px;
    top: 5px;
    width: 71px;
    height: 59px;
    border-radius: 7px;
    background: #383838;
    border: 2px solid #4a4a4a;
}

.d-ic.on svg {
    position: relative;
}

.dock-scroll {
    width: 20px;
    height: 1245px;
    margin-left: 3px;
    background: #4a4a4a;
}

.dock-scroll i {
    height: 868px;
    background: #676767;
}

/* floating swatches panel */
.swatch-panel {
    position: absolute;
    left: 2372px;
    top: 366px;
    width: 605px;
    height: 660px;
    display: flex;
    flex-direction: column;
    background: #535353;
    border: 3px solid #3b3b3b;
    border-top-width: 11px;
    box-shadow: 0 8px 14px rgba(0, 0, 0, .35);
}

.sw-tabs {
    height: 67px;
    flex: none;
    display: flex;
    background: #424242;
    font-size: 27px;
    font-weight: 700;
    color: #b2b2b2;
    letter-spacing: .2px;
}

.sw-tab {
    height: 67px;
    line-height: 60px;
    border-right: 2px solid #3b3b3b;
}

.sw-tab.on {
    width: 165px;
    padding-left: 21px;
    background: #535353;
    color: #f0f0f0;
    border: 0;
}

.brushes { width: 129px; padding-left: 20px; }
.symbols { width: 149px; padding-left: 18px; }

.sw-menu {
    flex: 1;
    display: flex;
    align-items: center;
    justify-content: flex-end;
    padding: 0 15px 6px 0;
}

.sw-dbl {
    width: 22px;
    height: 18px;
    fill: none;
    stroke: #c4c4c4;
    stroke-width: 2;
}

.sw-bar {
    width: 2px;
    height: 27px;
    margin: 0 17px 0 18px;
    background: #8a8a8a;
}

.sw-ham {
    width: 26px;
    height: 18px;
}

.sw-body {
    flex: 1;
    padding: 15px 13px 0 12px;
    display: flex;
    flex-direction: column;
}

.sw-top {
    height: 88px;
    flex: none;
    display: flex;
    justify-content: space-between;
}

.fs-mini {
    position: relative;
    width: 76px;
    height: 74px;
}

.fs-fill {
    position: absolute;
    left: 0;
    top: 0;
    width: 48px;
    height: 50px;
    background: #292929;
    border: 2px solid #fff;
    outline: 2px solid #3a3a3a;
    outline-offset: -1px;
}

.fs-stroke {
    position: absolute;
    left: 25px;
    top: 24px;
    width: 50px;
    height: 50px;
    padding: 2px;
    background: #fff;
    outline: 2px solid #444;
}

.view-toggle {
    width: 120px;
    height: 59px;
    display: flex;
    border: 2px solid #4a4a4a;
    border-radius: 5px;
}

.vt {
    width: 61px;
    display: flex;
    align-items: center;
    justify-content: center;
}

.vt.on {
    flex: 1;
    background: #333;
    border-radius: 0 4px 4px 0;
}

.vt svg {
    width: 30px;
    height: 36px;
}

.vt.on svg {
    width: 36px;
    height: 36px;
}

.sw-list {
    position: relative;
    height: 408px;
    flex: none;
    padding: 1px 0 0 1px;
    border: 2px solid #5d5d5d;
}

.sw-row {
    display: flex;
    gap: 4px;
    height: 40px;
}

.sw {
    width: 31px;
    height: 32px;
}

.sw svg {
    width: 100%;
    height: 100%;
}

.none { background: #fff; }
.reg { background: #eee; }
.white { background: #fff; }
.black { background: #000; }
.grad1 { background: linear-gradient(90deg, #fff, #222); }
.grad2 { background: linear-gradient(90deg, #ffd60f, #f4633b); }
.grad3 {
    background:
        linear-gradient(90deg, #2f87d2 10%, transparent 90%),
        repeating-conic-gradient(#cfd6dc 0 25%, #fff 0 50%) 0 0 / 8px 8px;
}
.grad4 {
    background:
        radial-gradient(ellipse, transparent 0 42%, #000 78%),
        repeating-conic-gradient(#bbb 0 25%, #fff 0 50%) 0 0 / 6px 6px;
}
.pat1 {
    background:
        radial-gradient(ellipse 60% 26% at 50% 0, #fff 80%, transparent 85%),
        radial-gradient(ellipse 60% 26% at 50% 100%, #fff 80%, transparent 85%),
        radial-gradient(circle at 50% 50%, #4e9e2e 0 30%, #f5c132 32% 36%, #79c143 38%);
}
.pat2 {
    background:
        radial-gradient(circle at 35% 45%, transparent 14%, #e9e0d4 16% 24%, transparent 26%),
        radial-gradient(circle at 72% 22%, transparent 10%, #e9e0d4 12% 20%, transparent 22%),
        radial-gradient(circle at 68% 78%, transparent 10%, #e9e0d4 12% 20%, transparent 22%),
        radial-gradient(circle at 18% 85%, #e9e0d4 0 12%, transparent 14%),
        #8a5a3c;
}
.dark { background: #2b2b2b; }

.rg { fill: none; stroke: #888; stroke-width: 2; }

.sw-folder {
    width: 28px;
    height: 23px;
    margin: 5px 2px 0 2px;
}

.doc-sw {
    background: linear-gradient(135deg, #292929 0 80%, #fff 80%);
    border: 3px solid #000;
    outline: 2px solid #fff;
    outline-offset: -1px;
}

.list-up, .list-down {
    position: absolute;
    right: 8px;
    stroke: #606060;
}

.list-up { top: 10px; transform: scaleY(-1); }
.list-down { bottom: 12px; }

.sw-tools {
    position: relative;
    height: 48px;
    display: flex;
    align-items: center;
}

.st-lib { width: 40px; height: 28px; margin-left: 14px; }
.st-imp { width: 32px; height: 32px; margin-left: 26px; }
.st-grid { width: 38px; height: 29px; margin-left: 115px; }
.st-list { width: 27px; height: 28px; margin-left: 29px; }
.st-folder { width: 33px; height: 25px; margin-left: 36px; }
.st-new { width: 27px; height: 27px; margin-left: 38px; }
.st-trash { width: 27px; height: 30px; margin-left: 35px; }

.sw-foot {
    height: 19px;
    flex: none;
    border-top: 5px solid #3b3b3b;
    padding-top: 0;
}

.sw-foot i {
    width: 48px;
    height: 11px;
    margin: 1px auto 0;
    background: repeating-linear-gradient(90deg, #373737 0 3px, transparent 3px 5.200px);
}

.dock-line {
    height: 2px;
}
```
